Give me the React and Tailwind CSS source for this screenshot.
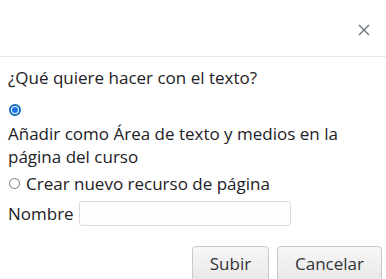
import React from "react";

export default function App() {
  return (
    <div className="w-[386px] h-[279px] overflow-hidden bg-white text-[17px] text-[#1d2125]" style={{ fontFamily: '"Open Sans", sans-serif' }}>
      {/* Header */}
      <div className="h-[57px] border-b border-[#e6e6e6] flex items-center justify-end pr-[16px] pt-[4px]">
        <svg width="12" height="12" viewBox="0 0 12 12" className="text-[#6a737b]">
          <path d="M1 1L11 11M11 1L1 11" stroke="currentColor" strokeWidth="1.3" />
        </svg>
      </div>

      {/* Body */}
      <div className="pl-[8px] pr-[24px] pt-[9px]">
        <p className="leading-[23px]">¿Qué quiere hacer con el texto?</p>

        <div className="mt-[15px] h-[12px] flex items-center">
          <span className="w-[12px] h-[12px] rounded-full border-2 border-[#0f6cbf] flex items-center justify-center ml-[1px]">
            <span className="w-[6px] h-[6px] rounded-full bg-[#1a73e8]" />
          </span>
        </div>
        <p className="leading-[23px] mt-[6px]">
          Añadir como Área de texto y medios en la página del curso
        </p>

        <div className="flex items-center mt-[4px] leading-[23px]">
          <span className="w-[11px] h-[11px] rounded-full border border-[#767676] mr-[6px] ml-[1px]" />
          <span>Crear nuevo recurso de página</span>
        </div>

        <div className="flex items-center mt-[6px]">
          <span className="mr-[5px]">Nombre</span>
          <input className="w-[212px] h-[25px] border border-[#dcdcdc] rounded-[3px] bg-[#fdfdfd] outline-none" />
        </div>

        <div className="flex justify-end gap-[8px] mt-[19px] mr-[-20px]">
          <button className="w-[77px] h-[36px] rounded-[4px] border border-[#c8c8c8] bg-gradient-to-b from-[#f7f7f7] to-[#e8e8e8] text-[#333]">
            Subir
          </button>
          <button className="w-[105px] h-[36px] rounded-[4px] border border-[#c8c8c8] bg-gradient-to-b from-[#f7f7f7] to-[#e8e8e8] text-[#333]">
            Cancelar
          </button>
        </div>
      </div>
    </div>
  );
}
